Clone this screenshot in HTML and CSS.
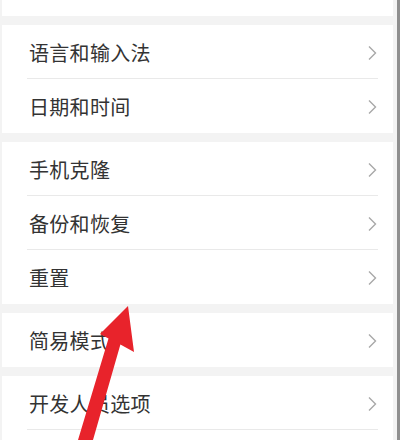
FILE: index.html
```html
<!DOCTYPE html>
<html lang="zh-CN">
<head>
<meta charset="utf-8">
<link rel="stylesheet" href="styles.css">
</head>
<body>
<div class="screen">
  <div class="card card-top"><div class="row blank"></div></div>
  <div class="card">
    <div class="row"><span class="label">语言和输入法</span><svg class="chev" viewBox="0 0 10 16"><path d="M2 1.5 L8.5 8 L2 14.5"/></svg></div>
    <div class="row"><span class="label">日期和时间</span><svg class="chev" viewBox="0 0 10 16"><path d="M2 1.5 L8.5 8 L2 14.5"/></svg></div>
  </div>
  <div class="card">
    <div class="row"><span class="label">手机克隆</span><svg class="chev" viewBox="0 0 10 16"><path d="M2 1.5 L8.5 8 L2 14.5"/></svg></div>
    <div class="row"><span class="label">备份和恢复</span><svg class="chev" viewBox="0 0 10 16"><path d="M2 1.5 L8.5 8 L2 14.5"/></svg></div>
    <div class="row"><span class="label">重置</span><svg class="chev" viewBox="0 0 10 16"><path d="M2 1.5 L8.5 8 L2 14.5"/></svg></div>
  </div>
  <div class="card">
    <div class="row"><span class="label">简易模式</span><svg class="chev" viewBox="0 0 10 16"><path d="M2 1.5 L8.5 8 L2 14.5"/></svg></div>
  </div>
  <div class="card">
    <div class="row"><span class="label">开发人员选项</span><svg class="chev" viewBox="0 0 10 16"><path d="M2 1.5 L8.5 8 L2 14.5"/></svg></div>
    <div class="row"><span class="label">&nbsp;</span></div>
  </div>
  <svg class="arrow" viewBox="0 0 400 440" width="400" height="440">
    <polygon points="128,306 134,352 120.4,344.5 93,440 78,440 108.5,338.4 100,334"/>
  </svg>
</div>
</body>
</html>
```

FILE: styles.css
```css
html, body {
  margin: 0;
  padding: 0;
}
body {
  background: #f3f3f3;
  font-family: "Noto Sans CJK SC", "Noto Sans", sans-serif;
}
.screen {
  position: relative;
  width: 400px;
  height: 440px;
  overflow: hidden;
  box-sizing: border-box;
  background: #f3f3f3;
  padding-left: 2px;
  padding-right: 4px;
  border-right: 3px solid #8f8f8f;
  display: flex;
  flex-direction: column;
  gap: 9px;
}
.card {
  background: #ffffff;
  flex-shrink: 0;
}
.card-top {
  margin-top: -38px;
}
.row {
  height: 54px;
  display: flex;
  align-items: center;
  justify-content: space-between;
  padding-left: 27px;
  padding-right: 16px;
  position: relative;
}
.row + .row::before {
  content: "";
  position: absolute;
  top: -1px;
  left: 25px;
  right: 15px;
  height: 1px;
  background: #e9e9e9;
}
.label {
  font-size: 20px;
  color: #333333;
  line-height: 24px;
  letter-spacing: 0.3px;
  padding-top: 2px;
}
.chev {
  width: 10px;
  height: 16px;
  fill: none;
  stroke: #a8a8a8;
  stroke-width: 1.4;
  margin-top: 1px;
}
.arrow {
  position: absolute;
  left: 0;
  top: 0;
  fill: #e8232b;
}
```
